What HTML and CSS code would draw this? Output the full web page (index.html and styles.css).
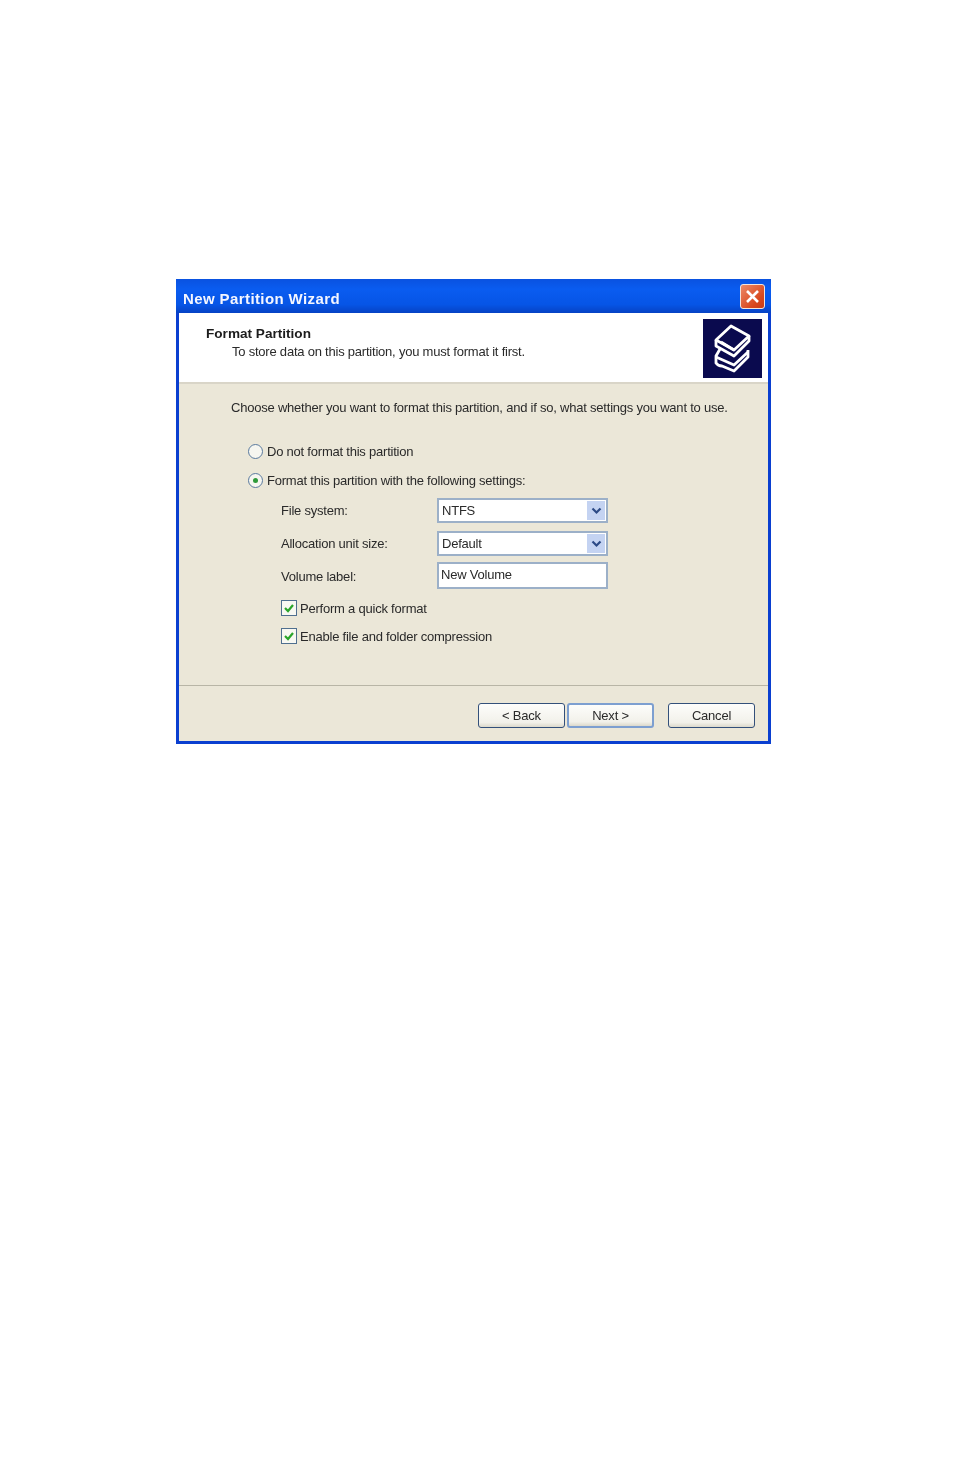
FILE: index.html
```html
<!DOCTYPE html>
<html>
<head>
  <title>New Partition Wizard</title>
  <link rel="stylesheet" href="styles.css">
</head>
<body>
<div class="window">
  <div class="titlebar">
    <span class="titleText">New Partition Wizard</span>
    <span class="closeBtn">
      <svg width="17" height="17" viewBox="0 0 17 17"><path d="M3 3 L14 14 M14 3 L3 14" stroke="#fff" stroke-width="2.6" fill="none"/></svg>
    </span>
  </div>
  <div class="content">
    <div class="header">
      <div class="headerText">
        <div class="headerTitle">Format Partition</div>
        <div class="headerSub">To store data on this partition, you must format it first.</div>
      </div>
      <svg class="books" width="59" height="59" viewBox="0 0 59 59">
        <rect width="59" height="59" fill="#0a0a4e"/>
        <g fill="none" stroke="#fff" stroke-width="2.8" stroke-linejoin="round">
          <path d="M17 30 L13 37 L13 44 Q15 47 19 47 L31 52 L45 38 L45 31"/>
          <path d="M13 38 L31 46 L45 33"/>
          <path d="M28 7 L46 17 L31 31 L13 21 Z" fill="#0a0a4e"/>
          <path d="M13 21 L13 27 L31 37 L46 22 L46 17"/>
          <path d="M18 23 L31 31"/>
        </g>
      </svg>
    </div>
    <div class="panel">
      <p class="intro">Choose whether you want to format this partition, and if so, what settings you want to use.</p>
      <div class="option first"><span class="radio"></span>Do not format this partition</div>
      <div class="option"><span class="radio on"></span>Format this partition with the following settings:</div>
      <div class="fields">
        <label>File system:</label>
        <div class="combo"><span>NTFS</span><span class="arrow"><svg width="11" height="8" viewBox="0 0 11 8"><path d="M1.5 1.5 L5.5 5.5 L9.5 1.5" stroke="#2c4a86" stroke-width="2.2" fill="none"/></svg></span></div>
        <label>Allocation unit size:</label>
        <div class="combo"><span>Default</span><span class="arrow"><svg width="11" height="8" viewBox="0 0 11 8"><path d="M1.5 1.5 L5.5 5.5 L9.5 1.5" stroke="#2c4a86" stroke-width="2.2" fill="none"/></svg></span></div>
        <label>Volume label:</label>
        <div class="textbox">New Volume</div>
      </div>
      <div class="check first"><span class="box"><svg width="12" height="12" viewBox="0 0 12 12"><path d="M2 6 L5 9 L10 3" stroke="#2aa52a" stroke-width="2.2" fill="none"/></svg></span>Perform a quick format</div>
      <div class="check"><span class="box"><svg width="12" height="12" viewBox="0 0 12 12"><path d="M2 6 L5 9 L10 3" stroke="#2aa52a" stroke-width="2.2" fill="none"/></svg></span>Enable file and folder compression</div>
    </div>
    <div class="footer">
      <span class="btn">&lt; Back</span>
      <span class="btn next">Next &gt;</span>
      <span class="btn cancel">Cancel</span>
    </div>
  </div>
</div>
</body>
</html>
```

FILE: styles.css
```css
body {
    margin: 0;
    background: #fff;
    padding: 279px 0 0 176px;
    height: 1195px;
    font-family: 'Liberation Sans', Arial, sans-serif;
    font-size: 13px;
    letter-spacing: -0.22px;
    color: #2a2a2a;
}
.window {
    width: 595px;
    height: 465px;
    background: #0a3fd0;
    border-radius: 3px 3px 0 0;
    display: flex;
    flex-direction: column;
    filter: blur(0.45px);
}
.titlebar {
    height: 34px;
    padding: 0 6px 0 7px;
    display: flex;
    align-items: center;
    justify-content: space-between;
    background: linear-gradient(#0a52e0, #0a5cf0 30%, #0655e6 75%, #0642c4);
}
.titleText {
    color: #f4f6ff;
    font-weight: bold;
    font-size: 15px;
    letter-spacing: 0.4px;
    margin-top: 4px;
}
.closeBtn {
    width: 25px;
    height: 25px;
    box-sizing: border-box;
    border: 1px solid #f4e4dc;
    border-radius: 3px;
    background: linear-gradient(135deg, #ec8a68, #d9481e 70%, #c83c18);
    display: flex;
    align-items: center;
    justify-content: center;
}
.content {
    flex: 1;
    margin: 0 3px 3px 3px;
    display: flex;
    flex-direction: column;
    background: #ebe7d8;
}
.header {
    height: 71px;
    box-sizing: border-box;
    background: #fff;
    border-bottom: 2px solid #d9d5c8;
    padding: 6px 6px 0 27px;
    display: flex;
    justify-content: space-between;
}
.headerText {
    padding-top: 7px;
}
.headerTitle {
    font-weight: bold;
    font-size: 13.6px;
    letter-spacing: 0;
    line-height: 16px;
    color: #1c1c1c;
}
.headerSub {
    margin-left: 26px;
    line-height: 20px;
}
.books {
    flex: none;
}
.panel {
    flex: 1;
    padding-top: 15px;
}
.intro {
    margin: 0 0 0 52px;
    line-height: 17px;
}
.option {
    height: 29px;
    margin-left: 69px;
    display: flex;
    align-items: center;
    gap: 4px;
}
.option.first {
    margin-top: 21px;
}
.radio {
    width: 15px;
    height: 15px;
    box-sizing: border-box;
    border: 1px solid #5a7a9e;
    border-radius: 50%;
    background: #f6f6f0;
    display: flex;
    align-items: center;
    justify-content: center;
}
.radio.on::after {
    content: "";
    width: 5px;
    height: 5px;
    border-radius: 50%;
    background: #2f9a3a;
}
.fields {
    margin: 3px 0 0 102px;
    display: grid;
    grid-template-columns: 156px 171px;
    grid-template-rows: 25px 25px 25px;
    row-gap: 8px;
    align-items: center;
}
.combo, .textbox {
    height: 100%;
    box-sizing: border-box;
    border: 2px solid #9cb0c8;
    background: #fff;
    display: flex;
    align-items: center;
    justify-content: space-between;
}
.combo {
    padding-left: 3px;
}
.textbox {
    height: 27px;
    margin-top: -2px;
    padding: 0 0 3px 2px;
}
.arrow {
    width: 18px;
    height: 19px;
    margin-right: 1px;
    background: #c4d3f2;
    display: flex;
    align-items: center;
    justify-content: center;
}
.check {
    height: 28px;
    margin-left: 102px;
    display: flex;
    align-items: center;
    gap: 3px;
}
.check.first {
    margin-top: 5px;
}
.box {
    width: 16px;
    height: 16px;
    box-sizing: border-box;
    border: 1px solid #4f6f8f;
    background: #f8f8f2;
    display: flex;
    align-items: center;
    justify-content: center;
}
.footer {
    height: 56px;
    box-sizing: border-box;
    border-top: 1px solid #b8b5a6;
    padding: 17px 13px 0 0;
    display: flex;
    justify-content: flex-end;
}
.btn {
    width: 87px;
    height: 25px;
    box-sizing: border-box;
    border: 1px solid #33507a;
    border-radius: 3px;
    background: linear-gradient(#fdfdfb, #f2f1ea 80%, #dcd9cb);
    display: flex;
    align-items: center;
    justify-content: center;
}
.next {
    margin-left: 2px;
    border: 2px solid #7d9fd0;
}
.cancel {
    margin-left: 14px;
}
```
